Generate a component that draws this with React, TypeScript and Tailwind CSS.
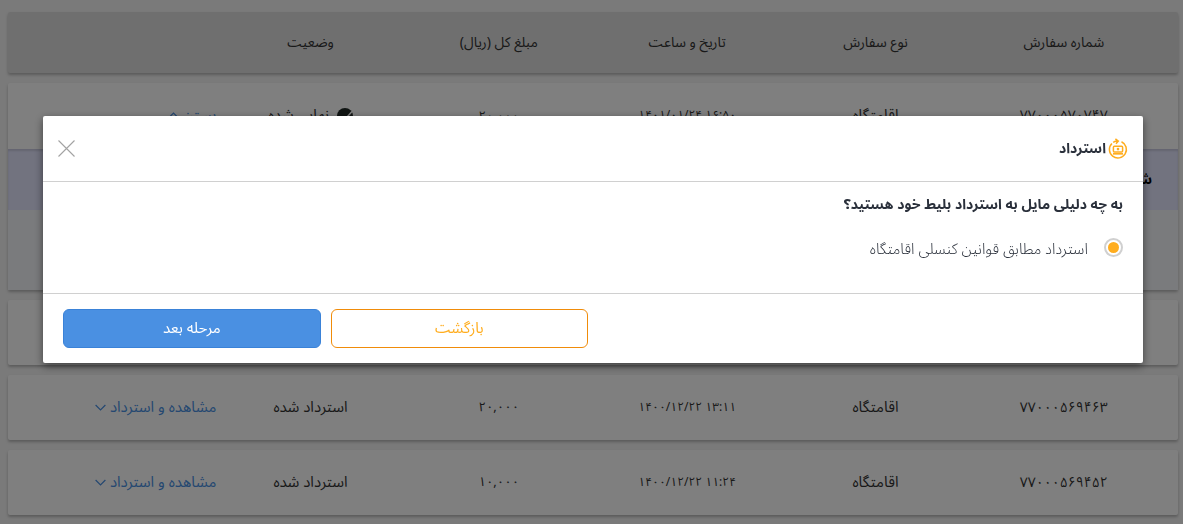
import { useState } from "react";

type Order = { id: string; type: string; date: string; price: string; status: string; open?: boolean };

const orders: Order[] = [
  { id: "۷۷۰۰۰۵۷۰۷۴۷", type: "اقامتگاه", date: "۱۴۰۱/۰۱/۲۴ ۱۶:۵۰", price: "۲۰,۰۰۰", status: "نهایی شده", open: true },
  { id: "", type: "", date: "", price: "", status: "" },
  { id: "۷۷۰۰۰۵۶۹۴۶۳", type: "اقامتگاه", date: "۱۴۰۰/۱۲/۲۲ ۱۳:۱۱", price: "۲۰,۰۰۰", status: "استرداد شده" },
  { id: "۷۷۰۰۰۵۶۹۴۵۲", type: "اقامتگاه", date: "۱۴۰۰/۱۲/۲۲ ۱۱:۲۴", price: "۱۰,۰۰۰", status: "استرداد شده" },
];

const columns = ["شماره سفارش", "نوع سفارش", "تاریخ و ساعت", "مبلغ کل (ریال)", "وضعیت"];

function Chevron({ up }: { up?: boolean }) {
  return (
    <svg width="11" height="7" viewBox="0 0 11 7" fill="none" stroke="currentColor" strokeWidth="1.2" aria-hidden="true">
      <path d={up ? "M.6 6 5.5 1l4.9 5" : "M.6 1l4.9 5 4.9-5"} />
    </svg>
  );
}

function CheckCircle() {
  return (
    <svg width="16" height="16" viewBox="0 0 16 16" aria-hidden="true">
      <circle cx="8" cy="8" r="8" fill="#212a26" />
      <path d="M4 9l3.500 3L15 3.500" fill="none" stroke="#fff" strokeWidth="1.600" />
    </svg>
  );
}

function RefundIcon() {
  return (
    <svg width="20" height="22" viewBox="0 0 20 22" fill="none" stroke="#ffad1f" strokeWidth="1.500" aria-hidden="true">
      <path d="M13.500 3.800A8.500 8.500 0 1 1 3.900 5.500" />
      <path d="M5.200 4.400C6.500 3.500 8 3.100 9.900 3.100M7.400.8l2.900 2.300L8 5.800" />
      <rect x="5.400" y="8.300" width="9.200" height="5.700" rx="1" />
      <path d="M5 15.800h10" strokeWidth="1.700" />
      <circle cx="10" cy="11.100" r="1.300" fill="#ffad1f" stroke="none" />
    </svg>
  );
}

function RefundModal({ onClose }: { onClose: () => void }) {
  const [reason, setReason] = useState("rules");

  return (
    <div className="fixed inset-0 bg-black/50 pt-[116px] pl-2 pr-[5px]">
      <div
        role="dialog"
        aria-modal="true"
        aria-labelledby="refund-title"
        className="mx-auto max-w-[1100px] rounded-xs bg-white text-[#2a303b] shadow-[0_3px_8px_rgba(0,0,0,0.5)]"
      >
        {/* Header */}
        <div className="flex h-[66px] items-center justify-between border-b border-[#d0d0d0] px-[15px]">
          <h2 id="refund-title" className="flex items-center gap-[2px] text-sm font-bold">
            <RefundIcon />
            استرداد
          </h2>
          <button type="button" aria-label="بستن" onClick={onClose} className="cursor-pointer text-[#a3a3a3]">
            <svg width="18" height="18" viewBox="0 0 18 18" stroke="currentColor" strokeWidth="1.100" aria-hidden="true">
              <path d="M.5.5l16 16M16.500.5l-16 16" />
            </svg>
          </button>
        </div>

        {/* Reasons */}
        <div className="h-[112px] border-b border-[#d0d0d0] px-5 pt-[13px]">
          <h3 className="text-sm font-bold">به چه دلیلی مایل به استرداد بلیط خود هستید؟</h3>
          <label className="mt-[23px] flex items-start gap-4 text-[15px] leading-[22px] font-light">
            <input
              type="radio"
              name="reason"
              value="rules"
              checked={reason === "rules"}
              onChange={(e) => setReason(e.target.value)}
              className="size-[19px] appearance-none rounded-full border-2 border-[#d0d0d0] bg-clip-content p-[2px] checked:bg-[#ffad1f]"
            />
            استرداد مطابق قوانین کنسلی اقامتگاه
          </label>
        </div>

        {/* Actions */}
        <div className="grid grid-cols-4 gap-[10px] px-5 py-[15px] text-[15px] font-normal">
          <button
            type="button"
            onClick={onClose}
            className="col-start-3 h-[39px] rounded-md border border-[#f08c0a] text-[#ffad1f]"
          >
            بازگشت
          </button>
          <button type="button" className="h-[39px] rounded-md border border-[#3a82d8] bg-[#4a90e2] text-white">
            مرحله بعد
          </button>
        </div>
      </div>
    </div>
  );
}

export default function App() {
  const [showModal, setShowModal] = useState(true);

  return (
    <div
      dir="rtl"
      className="h-screen overflow-hidden bg-[#f4f4f4] pt-3 pl-2 pr-[5px] font-['Noto_Sans_Arabic','DejaVu_Sans',sans-serif] text-sm text-[#333]"
    >
      <table className="block">
        <thead className="block rounded-xs bg-[#dfdfdf] shadow-[0_2px_3px_rgba(0,0,0,0.25)]">
          <tr className="grid h-[61px] grid-cols-6 items-center px-5">
            {columns.map((c) => (
              <th key={c} scope="col" className="font-normal">{c}</th>
            ))}
          </tr>
        </thead>
        {orders.map((o, i) => (
          <tbody key={i} className="mt-[10px] block rounded-xs bg-white shadow-[0_2px_3px_rgba(0,0,0,0.25)]">
            <tr className={`grid grid-cols-6 items-center px-5 text-center ${o.open ? "h-[66px]" : "h-[65px]"}`}>
              <td>{o.id}</td>
              <td className="text-[15px]">{o.type}</td>
              <td dir="ltr" className="text-xs">{o.date}</td>
              <td className="text-[13px]">{o.price}</td>
              <td className="flex items-center justify-center gap-2 text-[15px]">
                {o.open && <CheckCircle />}
                {o.status}
              </td>
              <td className="text-[15px]">
                {o.id && (
                  <button type="button" onClick={() => setShowModal(true)} className="flex items-center gap-1 text-[#4a90e2]">
                    {o.open ? "بستن" : "مشاهده و استرداد"}
                    <Chevron up={o.open} />
                  </button>
                )}
              </td>
            </tr>
            {o.open && (
              <>
                <tr className="flex h-[61px] items-center bg-[#e4e6ff] px-[26px] shadow-[inset_0_2px_2px_rgba(0,0,0,0.12)]">
                  <th scope="row" className="font-bold text-black">شماره بلیط</th>
                </tr>
                <tr className="block h-[80px] bg-[#f5f7fa]">
                  <td />
                </tr>
              </>
            )}
          </tbody>
        ))}
      </table>

      {showModal && <RefundModal onClose={() => setShowModal(false)} />}
    </div>
  );
}
